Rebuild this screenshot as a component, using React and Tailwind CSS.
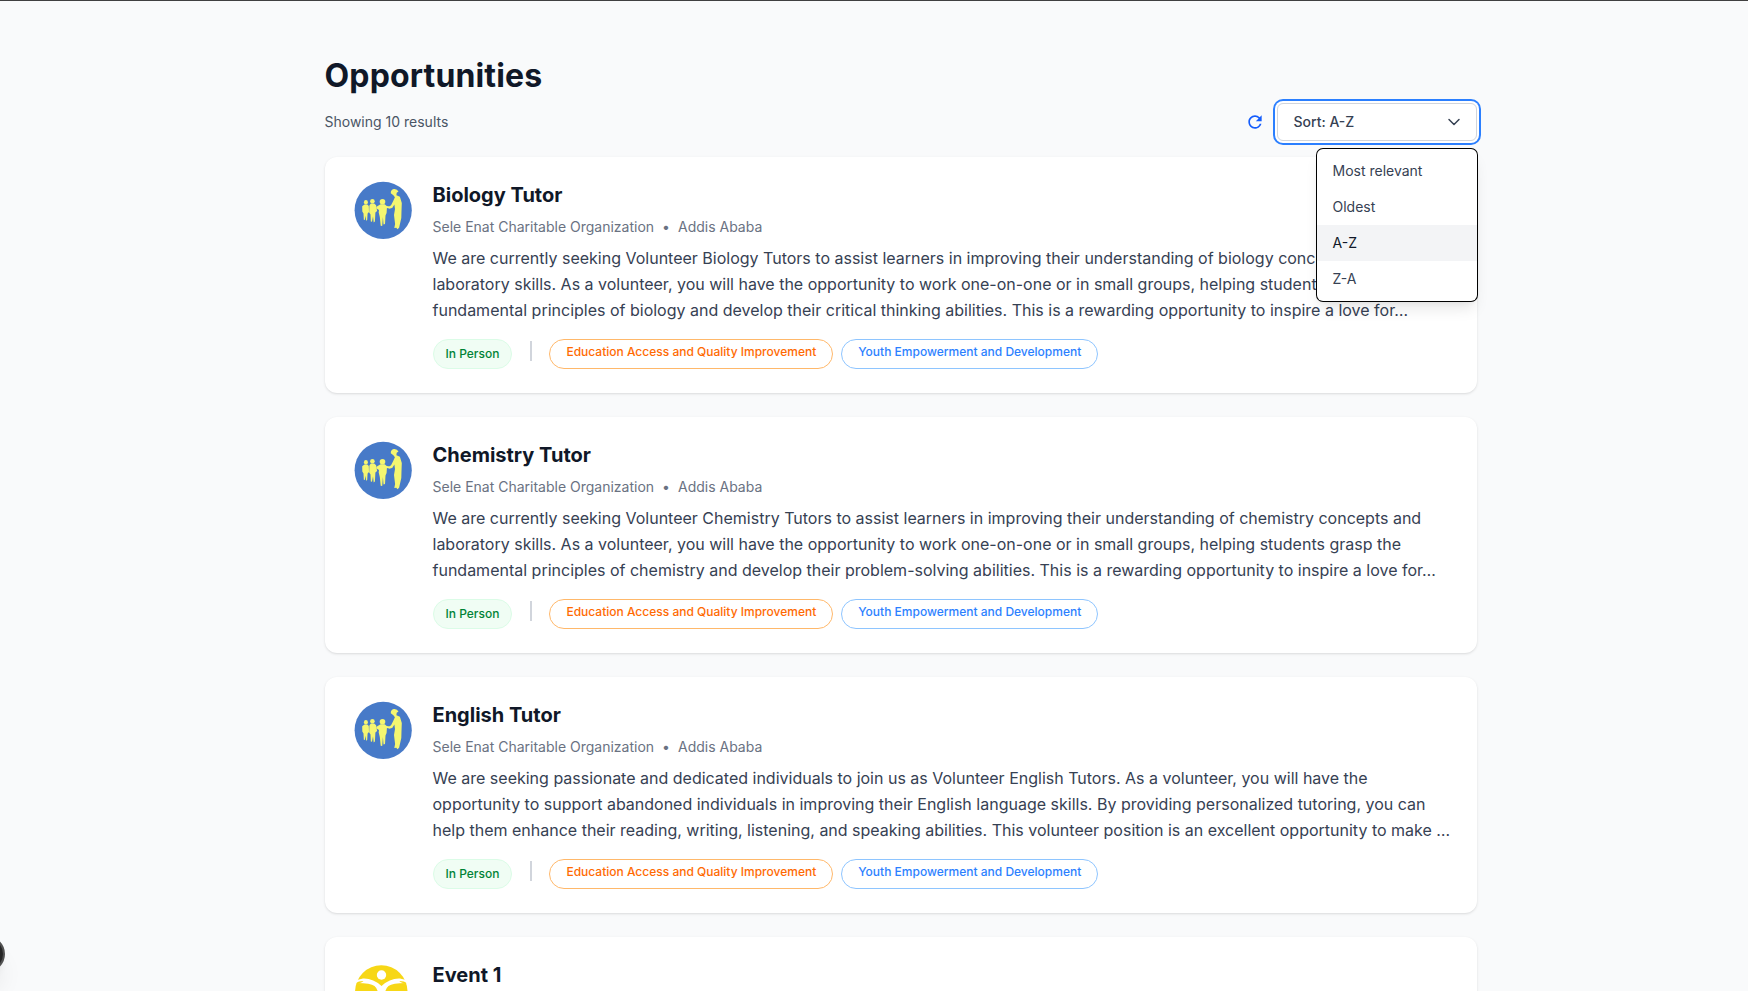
import React from 'react';
import { ChevronDown } from 'lucide-react';
import { MdRefresh } from 'react-icons/md';

const jobs = [
  {
    title: 'Biology Tutor',
    lines: [
      'We are currently seeking Volunteer Biology Tutors to assist learners in improving their understanding of biology concepts and',
      'laboratory skills. As a volunteer, you will have the opportunity to work one-on-one or in small groups, helping students grasp the',
      'fundamental principles of biology and develop their critical thinking abilities. This is a rewarding opportunity to inspire a love for…',
    ],
  },
  {
    title: 'Chemistry Tutor',
    lines: [
      'We are currently seeking Volunteer Chemistry Tutors to assist learners in improving their understanding of chemistry concepts and',
      'laboratory skills. As a volunteer, you will have the opportunity to work one-on-one or in small groups, helping students grasp the',
      'fundamental principles of chemistry and develop their problem-solving abilities. This is a rewarding opportunity to inspire a love for…',
    ],
  },
  {
    title: 'English Tutor',
    lines: [
      'We are seeking passionate and dedicated individuals to join us as Volunteer English Tutors. As a volunteer, you will have the',
      'opportunity to support abandoned individuals in improving their English language skills. By providing personalized tutoring, you can',
      'help them enhance their reading, writing, listening, and speaking abilities. This volunteer position is an excellent opportunity to make …',
    ],
  },
];

const options = ['Most relevant', 'Oldest', 'A-Z', 'Z-A'];

function FamilyLogo() {
  return (
    <svg className="block h-16 w-16" viewBox="0 0 64 64">
      <circle cx="34.2" cy="29.3" r="28.6" fill="#477ac8" />
      <g fill="#f5f670">
        <ellipse cx="16.9" cy="21.3" rx="2" ry="2.2" />
        <path d="M15.500 23.500h2.800l1.500 1.500.2 6-1.400 1.500-.4 6.500-1.100.7-.5-5-.8 4.300-1-.3-.3-6.200-1.200-2-.1-5.300Z" />
        <ellipse cx="23.400" cy="20.300" rx="2.300" ry="2.300" />
        <path d="M21.800 22.500h3.400l1.900 1.800 1 5.700-1.700 1.500-.5 9-1.200 1-.7-6-1 5.300-1.200-.3-.3-7-1.300-2 .2-7Z" />
        <ellipse cx="33.500" cy="20.700" rx="2.800" ry="2.700" />
        <path d="M31.500 23.300h4.200l2 1.600 3.300.6 2-.9.3 1.300-2.300 1.500-3.100-.3-.3 5-1.100 2.500-.5 8.400-1.500.6-.6-7.300-.7 8.700-1.500-.3-.9-8.700-1.100-4.500.3-2.500-2.700-1.800.2-1.400Z" />
        <path d="M41.800 12.200q-.2-3.500 3-4.200 3.200-.4 4.700 2.500l-1.800 1.200-.3 2.500 3.500 1.600 1.900 6.200-.3 8-.2 7-2.200 9.800-1.600 1.500-1.200-1.500-2 .2.8-4-1.100-9 1-6-.6-4.500-2.200 3.500-3.400.5-.2-1.300 2.600-2.200 1.900-3.800 1.800-4-1.500-2Z" />
      </g>
    </svg>
  );
}

function SunLogo() {
  return (
    <svg className="block h-16 w-16" viewBox="0 0 64 64">
      <circle cx="32.3" cy="30.500" r="26.200" fill="#f7d716" />
      <circle cx="32.500" cy="14" r="4.700" fill="#fff" />
      <path
        d="M4 20l10-2.500q10-.5 18.500 7.500 8.500-8 18.500-7.500l10 2.500v2q-17-.5-21.500 3-3.500 3-3.500 8v20h-7V33q0-5-3.500-8-4.500-3.500-21.500-3Z"
        fill="#fff"
      />
      <path d="M7.200 22.300q2-2.300 7.300-2.300-2 2.300-7.300 2.300ZM57.600 22.300q-2-2.300-7.300-2.300 2 2.300 7.300 2.300Z" fill="#f7d716" />
    </svg>
  );
}

function Card({ title, lines, logo }) {
  return (
    <article className="flex h-[236px] shrink-0 gap-5 rounded-xl bg-white p-6 shadow-sm">
      <div className="w-16 shrink-0">{logo}</div>
      <div className="min-w-0">
        <h2 className="text-xl font-bold text-gray-900">{title}</h2>
        {lines && (
          <>
            <div className="mt-2 flex gap-2 text-sm text-gray-500">
              <span>Sele Enat Charitable Organization</span>
              <span>•</span>
              <span>Addis Ababa</span>
            </div>
            <p className="mt-2 text-base leading-[26px] text-gray-700">
              {lines.map((line) => (
                <span key={line} className="block whitespace-nowrap">
                  {line}
                </span>
              ))}
            </p>
            <div className="mt-4 flex text-xs font-medium">
              <span className="flex h-[30px] items-center rounded-full border border-green-100 bg-green-50 px-3 text-green-700">
                In Person
              </span>
              <span className="mt-0.5 ml-[18px] h-5 w-0.5 bg-gray-300" />
              <span className="ml-[17px] h-[30px] rounded-full border border-orange-300 px-4 pt-1 text-orange-500">
                Education Access and Quality Improvement
              </span>
              <span className="ml-2 h-[30px] rounded-full border border-blue-300 px-4 pt-1 text-blue-500">
                Youth Empowerment and Development
              </span>
            </div>
          </>
        )}
      </div>
    </article>
  );
}

export default function App() {
  return (
    <div className="relative h-[991px] overflow-hidden border-t border-neutral-700 bg-gray-50 font-[Inter,sans-serif]">
      <main className="ml-[324.5px] w-[1152px] pt-[57px]">
        <h1 className="text-[32px] leading-9 font-bold tracking-[0.15px] text-gray-900">Opportunities</h1>
        <div className="mt-[9px] flex items-center justify-between">
          <p className="text-sm text-gray-600">Showing 10 results</p>
          <div className="flex items-center gap-3">
            <button className="text-blue-600">
              <MdRefresh size={20} />
            </button>
            <div className="relative">
              <button className="flex h-[38px] w-[200px] items-center justify-between rounded-md border border-gray-300 bg-white px-4 text-sm font-medium text-gray-700 ring-2 ring-blue-500 ring-offset-2">
                Sort: A-Z
                <ChevronDown size={20} strokeWidth={1.8} className="-mr-1" />
              </button>
              <ul className="absolute top-[46px] right-0 z-10 w-40 rounded-md bg-white py-1 text-sm text-gray-700 shadow-lg ring-1 ring-black">
                {options.map((o) => (
                  <li key={o} className={o === 'A-Z' ? 'bg-gray-100 px-4 py-2 text-gray-900' : 'px-4 py-2'}>
                    {o}
                  </li>
                ))}
              </ul>
            </div>
          </div>
        </div>
        <div className="mt-4 flex flex-col gap-6">
          {jobs.map((j) => (
            <Card key={j.title} title={j.title} lines={j.lines} logo={<FamilyLogo />} />
          ))}
          <Card title="Event 1" logo={<SunLogo />} />
        </div>
      </main>
      <div className="absolute top-[935px] -left-[31px] h-9 w-9 rounded-full border-2 border-neutral-600 bg-neutral-800 shadow-xl" />
    </div>
  );
}
